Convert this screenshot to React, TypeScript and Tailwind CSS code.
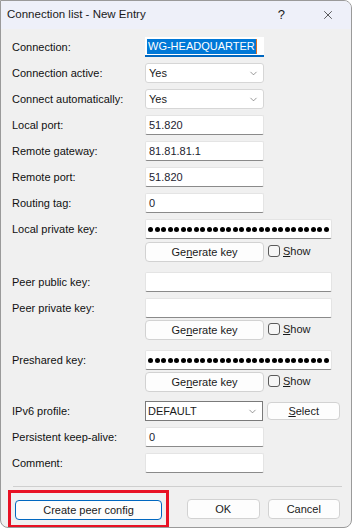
import React, { FC } from "react";
import { ChevronDown, X } from "lucide-react";

const font = { fontFamily: '"Segoe UI", "Liberation Sans", Arial, sans-serif' };

const Label: FC<{ text: string }> = ({ text }) => (
  <div className="w-[133px] shrink-0 text-[11px] text-[#111]">{text}</div>
);

const TextBox: FC<{ value?: string; wide?: boolean }> = ({ value, wide }) => (
  <div
    className={`${wide ? "w-[187px]" : "w-[119px]"} h-[20px] bg-white border border-[#e4e4e4] border-b-[#8a8a8a] rounded-[2px] flex items-center px-[3px] text-[11px] text-[#1c1c30]`}
  >
    {value}
  </div>
);

const Dots: FC = () => (
  <div className="w-[187px] h-[20px] bg-white border border-[#e4e4e4] border-b-[#8a8a8a] rounded-[2px] flex items-center pl-[2px] gap-[1.5px]">
    {Array.from({ length: 28 }).map((_, i) => (
      <span key={i} className="w-[5px] h-[5px] rounded-full bg-black shrink-0" />
    ))}
  </div>
);

const Combo: FC<{ value: string }> = ({ value }) => (
  <div className="w-[119px] h-[20px] bg-white border border-[#d6d6d6] rounded-[3px] flex items-center justify-between pl-[3px] pr-[4px] text-[11px] text-[#1a1a1a]">
    <span>{value}</span>
    <ChevronDown size={11} strokeWidth={1.4} className="text-[#606060]" />
  </div>
);

const GenRow: FC = () => (
  <div className="flex items-center">
    <div className="w-[133px] shrink-0" />
    <button className="w-[119px] h-[20px] bg-[#fdfdfd] border border-[#d2d2d2] rounded-[4px] text-[11px] text-[#1a1a1a]">
      Ge<span className="underline">n</span>erate key
    </button>
    <div className="ml-[4px] flex items-center gap-[3px] text-[11px] text-[#1a1a1a] -mt-[2px]">
      <span className="w-[12px] h-[12px] border border-[#5a5a5a] rounded-[3px] bg-[#f6f6f6]" />
      <span>
        <span className="underline">S</span>how
      </span>
    </div>
  </div>
);

const Row: FC<{ label: string; mt: string; children: React.ReactNode }> = ({ label, mt, children }) => (
  <div className={`flex items-center ${mt}`}>
    <Label text={label} />
    {children}
  </div>
);

const App: FC = () => {
  return (
    <div className="w-[353px] h-[529px] bg-white" style={font}>
      <div className="w-[352px] h-[528px] border border-[#9a9a9a] rounded-tr-[8px] rounded-b-[8px] overflow-hidden bg-[#f0f0f0] flex flex-col">
        {/* Title bar */}
        <div className="h-[28px] shrink-0 bg-[#eef0f9] flex items-center pl-[6px] text-[11.5px] text-[#1a1a1a]">
          <span className="flex-1">Connection list - New Entry</span>
          <span className="text-[13px] mr-[36px]">?</span>
          <X size={14} strokeWidth={1.2} className="mr-[16px] text-[#1a1a1a]" />
        </div>

        <div className="px-[11px] pt-[8px] flex flex-col">
          <Row label="Connection:" mt="">
            <div className="w-[119px] h-[20px] bg-white border-b-2 border-[#0067c0] flex items-center pl-[2px]">
              <span className="bg-[#0078d7] text-white text-[11px] px-[1px] leading-[15px]">WG-HEADQUARTER</span>
              <span className="w-[1px] h-[15px] bg-[#e07020]" />
            </div>
          </Row>
          <Row label="Connection active:" mt="mt-[6px]">
            <Combo value="Yes" />
          </Row>
          <Row label="Connect automatically:" mt="mt-[6px]">
            <Combo value="Yes" />
          </Row>
          <Row label="Local port:" mt="mt-[6px]">
            <TextBox value="51.820" />
          </Row>
          <Row label="Remote gateway:" mt="mt-[6px]">
            <TextBox value="81.81.81.1" />
          </Row>
          <Row label="Remote port:" mt="mt-[6px]">
            <TextBox value="51.820" />
          </Row>
          <Row label="Routing tag:" mt="mt-[6px]">
            <TextBox value="0" />
          </Row>
          <Row label="Local private key:" mt="mt-[6px]">
            <Dots />
          </Row>
          <div className="mt-[3px]">
            <GenRow />
          </div>
          <Row label="Peer public key:" mt="mt-[10px]">
            <TextBox wide />
          </Row>
          <Row label="Peer private key:" mt="mt-[6px]">
            <TextBox wide />
          </Row>
          <div className="mt-[2px]">
            <GenRow />
          </div>
          <Row label="Preshared key:" mt="mt-[10px]">
            <Dots />
          </Row>
          <div className="mt-[2px]">
            <GenRow />
          </div>
          <Row label="IPv6 profile:" mt="mt-[9px]">
            <div className="w-[119px] h-[20px] bg-white border border-[#7a7a7a] flex items-center justify-between pl-[2px] pr-[4px] text-[11px] text-[#1a1a1a]">
              <span>DEFAULT</span>
              <ChevronDown size={11} strokeWidth={1.4} className="text-[#606060]" />
            </div>
            <button className="ml-[4px] w-[73px] h-[18px] bg-[#fdfdfd] border border-[#d2d2d2] rounded-[4px] text-[11px] text-[#1a1a1a]">
              <span className="underline">S</span>elect
            </button>
          </Row>
          <Row label="Persistent keep-alive:" mt="mt-[6px]">
            <TextBox value="0" />
          </Row>
          <Row label="Comment:" mt="mt-[6px]">
            <TextBox />
          </Row>

          <div className="mt-[13px] h-[1px] bg-[#cfcfcf] mx-[1px] w-[329px]" />

          <div className="mt-[3px] flex items-center">
            <div className="-ml-[4px] border-[3px] border-[#e81123] p-[4px]">
              <button className="w-[147px] h-[20px] bg-[#fdfdfd] border border-[#0067c0] rounded-[4px] text-[11px] text-[#1a1a1a]">
                Create peer config
              </button>
            </div>
            <button className="ml-[18px] w-[73px] h-[20px] bg-[#fdfdfd] border border-[#d2d2d2] rounded-[4px] text-[11px] text-[#1a1a1a]">
              OK
            </button>
            <button className="ml-[8px] w-[73px] h-[20px] bg-[#fdfdfd] border border-[#d2d2d2] rounded-[4px] text-[11px] text-[#1a1a1a]">
              Cancel
            </button>
          </div>
        </div>
      </div>
    </div>
  );
};

export default App;
